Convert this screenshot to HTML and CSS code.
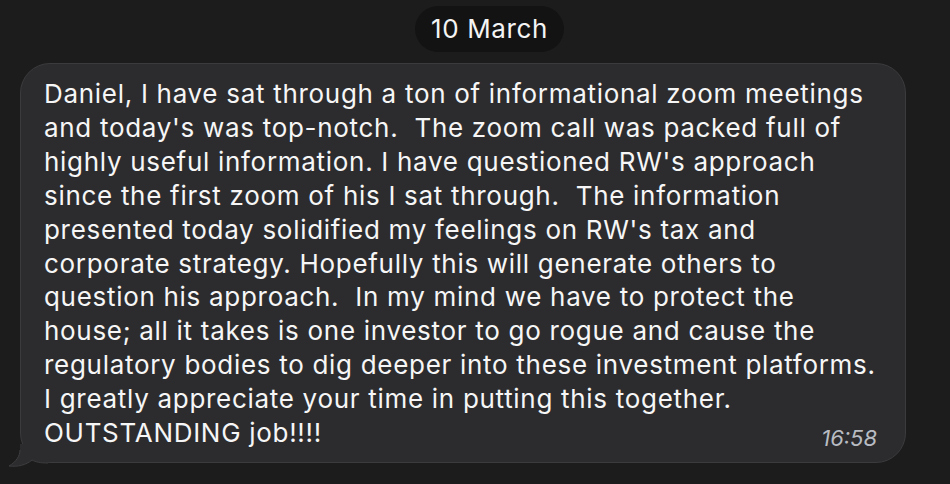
FILE: index.html
```html
<!DOCTYPE html>
<html>
<head>
<meta charset="utf-8">
<link rel="stylesheet" href="styles.css">
</head>
<body>
<div class="chat">
  <div class="date-row"><span class="date-pill">10 March</span></div>
  <div class="bubble">
    <p class="msg">Daniel, I have sat through a ton of informational zoom meetings<br>and today's was top-notch.  The zoom call was packed full of<br>highly useful information. I have questioned RW's approach<br>since the first zoom of his I sat through.  The information<br>presented today solidified my feelings on RW's tax and<br>corporate strategy. Hopefully this will generate others to<br>question his approach.  In my mind we have to protect the<br>house; all it takes is one investor to go rogue and cause the<br>regulatory bodies to dig deeper into these investment platforms.<br>I greatly appreciate your time in putting this together.<br>OUTSTANDING job!!!!</p>
    <span class="time">16:58</span>
    <svg class="tail" width="40" height="24" viewBox="0 0 40 24">
      <path d="M12 0 L12 6 C12 12 8 18 1 22 C10 23 18 21 24 16 C28 18 32 19 40 19 L40 0 Z" fill="#2c2c2e"/>
      <path d="M12 6 C12 12 8 18 1 22 C10 23 18 21 24 16 C28 18 32 19 40 19" fill="none" stroke="#3d3d40" stroke-width="1"/>
    </svg>
  </div>
</div>
</body>
</html>
```
FILE: styles.css
```css
html, body {
  margin: 0;
  padding: 0;
  background: #1c1c1c;
}
body {
  width: 950px;
  height: 484px;
  overflow: hidden;
  font-family: Inter, "Open Sans", sans-serif;
  color: #ffffff;
}
.chat {
  display: flex;
  flex-direction: column;
  padding-top: 6px;
}
.date-row {
  display: flex;
  justify-content: center;
  padding-left: 29px;
}
.date-pill {
  background: #131313;
  border-radius: 23px;
  padding: 0 16px;
  height: 46px;
  line-height: 46px;
  font-size: 26px;
  letter-spacing: 0.6px;
  color: #f4f4f4;
}
.bubble {
  position: relative;
  margin: 11px 0 0 20px;
  width: 886px;
  height: 400px;
  box-sizing: border-box;
  background: #2c2c2e;
  border: 1px solid #3b3b3e;
  border-radius: 30px;
  padding: 13px 20px 0 23px;
}
.msg {
  margin: 0;
  font-size: 26px;
  line-height: 33.9px;
  letter-spacing: 0.7px;
  white-space: pre-wrap;
  color: #f6f6f6;
}
.time {
  position: absolute;
  right: 28px;
  bottom: 13px;
  font-size: 22px;
  line-height: 22px;
  font-style: italic;
  color: #b8bcc2;
}
.tail {
  position: absolute;
  left: -13px;
  bottom: -6px;
}
```
